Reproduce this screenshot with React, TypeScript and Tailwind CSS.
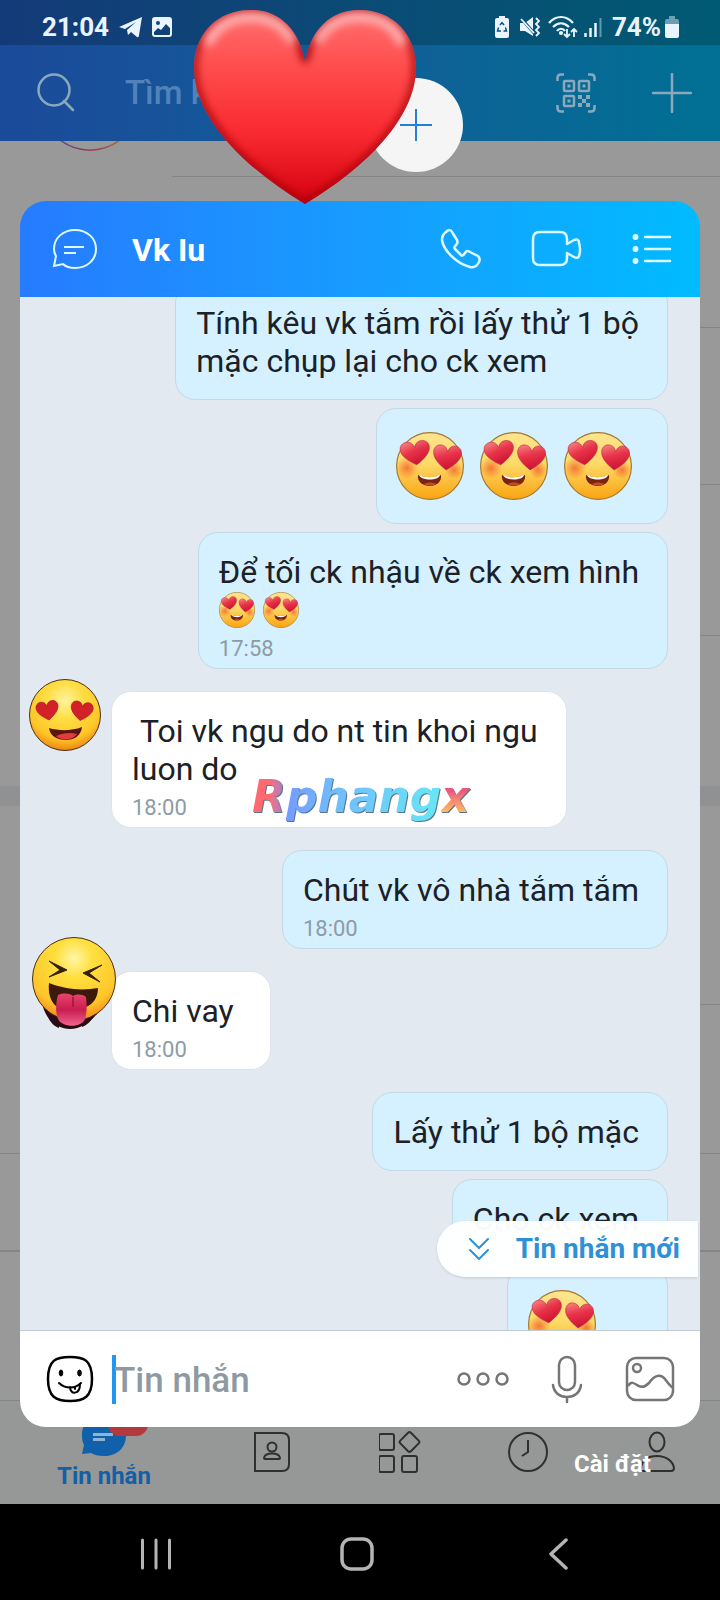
import React, { useState } from 'react';

const HEART =
  'M50 24 C47 10 38 1 25 1 C11 1 1 12 1 27 C1 51 24 72 50 90 C76 72 99 51 99 27 C99 12 89 1 75 1 C62 1 53 10 50 24Z';

const LoveFace = ({ className }: { className: string }) => (
  <svg viewBox="0 0 68 68" className={className} aria-hidden="true">
    <defs>
      <linearGradient id="faceFill" x1="0" y1="0" x2="0" y2="1">
        <stop offset="0" stopColor="#fde58f" />
        <stop offset="0.45" stopColor="#fddb6a" />
        <stop offset="1" stopColor="#fba30f" />
      </linearGradient>
      <radialGradient id="faceBlush">
        <stop offset="0" stopColor="#f4622a" stopOpacity="0.8" />
        <stop offset="1" stopColor="#f4622a" stopOpacity="0" />
      </radialGradient>
      <linearGradient id="eyeFill" x1="0" y1="0" x2="0.4" y2="1">
        <stop offset="0" stopColor="#f88a86" />
        <stop offset="0.5" stopColor="#e8344a" />
        <stop offset="1" stopColor="#cf1433" />
      </linearGradient>
    </defs>
    <circle cx="34" cy="34" r="33.4" fill="url(#faceFill)" stroke="#a47a32" strokeWidth="1.2" />
    <circle cx="11" cy="36" r="11" fill="url(#faceBlush)" />
    <circle cx="58" cy="38" r="9" fill="url(#faceBlush)" />
    <g fill="url(#eyeFill)" stroke="#b8283c" strokeWidth="2">
      <path transform="translate(3 11) rotate(-7) scale(.3 .265)" d={HEART} />
      <path transform="translate(38 12) rotate(5) scale(.285 .275)" d={HEART} />
    </g>
    <path d="M22 43 C28 46 39 46 45 43 C46 50 40 54 34 54 C27 54 21 50 22 43Z" fill="#7a2410" />
    <path d="M23 43 C29 46 38 46 44 43 C43 49 25 49 23 43Z" fill="#fff" />
    <path d="M28 52 C31 50 37 50 40 52 C37 54 31 54 28 52Z" fill="#c24a26" />
  </svg>
);

const GrinningLoveAvatar = () => (
  <svg viewBox="0 0 72 72" className="h-[72px] w-[72px]" aria-hidden="true">
    <defs>
      <radialGradient id="avatarOne" cx="0.5" cy="0.3" r="0.72">
        <stop offset="0" stopColor="#fff3a0" />
        <stop offset="0.35" stopColor="#ffdf45" />
        <stop offset="0.75" stopColor="#fdc526" />
        <stop offset="1" stopColor="#ec7d12" />
      </radialGradient>
    </defs>
    <circle cx="36" cy="36" r="35.5" fill="url(#avatarOne)" stroke="#4b2f10" strokeWidth="1" />
    <g fill="#d3212c" stroke="#a8141f" strokeWidth="3">
      <path transform="translate(6 24) rotate(-9) scale(.225 .21)" d={HEART} />
      <path transform="translate(43 21) rotate(9) scale(.225 .21)" d={HEART} />
    </g>
    <path d="M20 49 C30 52 43 52 53 48 C52 57 45 61 37 61 C28 61 21 57 20 49Z" fill="#5a1511" />
    <path d="M27 57 C33 54 42 53 48 55 C43 62 32 62 27 57Z" fill="#e33a3c" />
  </svg>
);

const TongueAvatar = () => (
  <svg viewBox="0 0 84 92" className="h-[92px] w-[84px]" aria-hidden="true">
    <defs>
      <radialGradient id="avatarTwo" cx="0.5" cy="0.25" r="0.78">
        <stop offset="0" stopColor="#fff6a6" />
        <stop offset="0.3" stopColor="#ffdf3d" />
        <stop offset="0.75" stopColor="#fec52a" />
        <stop offset="1" stopColor="#f07f17" />
      </radialGradient>
      <linearGradient id="tongue" x1="0" y1="0" x2="0" y2="1">
        <stop offset="0" stopColor="#e8456b" />
        <stop offset="0.5" stopColor="#c91d50" />
        <stop offset="1" stopColor="#f0648a" />
      </linearGradient>
    </defs>
    <path d="M11 70 C16 86 28 92 38 92 C50 92 60 84 67 74Z" fill="#2a0a14" />
    <circle cx="42" cy="42" r="41.5" fill="url(#avatarTwo)" stroke="#4b2f10" strokeWidth="1" />
    <path d="M17 24 L35 33 L17 40 L28 33Z M70 28 L51 36 L68 45 L57 36Z" fill="#33200c" stroke="#33200c" strokeWidth="1" />
    <path d="M17 46 C32 52 50 54 66 51 C66 61 61 67 54 70 L24 69 C18 64 16 55 17 46Z" fill="#3b1a0c" />
    <path d="M14 74 C18 79 22 82 27 83 V91 C21 89 16 83 14 74Z M62 79 C58 81 54 83 50 83 V90 C55 88 59 84 62 79Z" fill="#2a0a14" />
    <path d="M26 58 C31 56 37 56 41 59 C45 57 50 57 54 60 C55 68 55 76 53 82 C50 91 30 91 26 82 C23 75 24 64 26 58Z" fill="url(#tongue)" />
    <path d="M41 60 V70" stroke="#a31340" strokeWidth="1.5" />
  </svg>
);

const BigHeart = () => (
  <svg viewBox="0 0 224 196" className="h-[196px] w-[224px]" aria-hidden="true">
    <defs>
      <linearGradient id="heartFill" x1="0" y1="0" x2="0" y2="1">
        <stop offset="0" stopColor="#ff7070" />
        <stop offset="0.3" stopColor="#ff4c4c" />
        <stop offset="0.65" stopColor="#f8282f" />
        <stop offset="1" stopColor="#d3000f" />
      </linearGradient>
      <clipPath id="heartClip">
        <path d="M112 53 C106 20 86 1 58 1 C24 1 1 25 1 59 C1 108 50 158 112 195 C174 158 223 108 223 59 C223 25 200 1 166 1 C138 1 118 20 112 53Z" />
      </clipPath>
      <filter id="heartSoft" filterUnits="userSpaceOnUse" x="-30" y="-30" width="284" height="256">
        <feGaussianBlur stdDeviation="4" />
      </filter>
    </defs>
    <g clipPath="url(#heartClip)">
      <rect width="224" height="196" fill="url(#heartFill)" />
      <path
        d="M112 53 C106 20 86 1 58 1 C24 1 1 25 1 59 C1 108 50 158 112 195 C174 158 223 108 223 59 C223 25 200 1 166 1 C138 1 118 20 112 53Z"
        fill="none"
        stroke="#9c000c"
        strokeWidth="6"
        filter="url(#heartSoft)"
      />
      <g fill="none" stroke="#ffb8b8" strokeWidth="9" strokeLinecap="round" filter="url(#heartSoft)">
        <path d="M16 32 C26 14 42 8 58 8 C76 8 90 16 98 30" />
        <path d="M126 30 C134 16 148 8 166 8 C184 8 200 14 208 32" />
      </g>
    </g>
  </svg>
);

const StatusBar = () => (
  <div className="flex h-[45px] items-center bg-gradient-to-r from-[#133a78] to-[#005a72] pr-[41px] pl-[42px] pt-2 text-[#eaf4ff]">
    <span className="text-[26px] leading-8 font-bold">21:04</span>
    <svg viewBox="0 0 24 22" className="ml-[10px] h-[22px] w-6" fill="currentColor" aria-hidden="true">
      <path d="M0 11 L23 1 L20 19 C20 21 19 21.500 18 21 L12 16 L9 19 L8 14 L17 6 L6 13Z" />
    </svg>
    <svg viewBox="0 0 20 20" className="ml-[9px] h-5 w-5" aria-hidden="true">
      <rect x="1" y="1" width="18" height="18" rx="2" fill="none" stroke="currentColor" strokeWidth="2" />
      <path d="M1 1 H19 V12 L14 7 L9 13 L6 11 L1 16Z" fill="currentColor" />
      <circle cx="6" cy="6" r="2" fill="#12457f" />
    </svg>
    <div className="ml-auto flex items-center">
      <svg viewBox="0 0 14 22" className="h-[22px] w-[14px]" aria-hidden="true">
        <path d="M4 0 H10 V2 H12 Q14 2 14 4 V20 Q14 22 12 22 H2 Q0 22 0 20 V4 Q0 2 2 2 H4Z" fill="currentColor" />
        <path d="M5 9 L7 6.500 L9 9 M10.500 11.500 L11.500 15 H8.500 M3.500 11.500 L2.500 15 H6" fill="none" stroke="#0a4d78" strokeWidth="1.400" />
      </svg>
      <svg viewBox="0 0 22 22" className="ml-[10px] h-[22px] w-[22px]" aria-hidden="true">
        <path d="M1 7 H6 L14 1 V20 L6 15 H1Z" fill="currentColor" />
        <path d="M1 1 L15 17" stroke="#08507a" strokeWidth="3" />
        <path d="M2 3 L15 17" stroke="currentColor" strokeWidth="1.800" />
        <path d="M17 2 L20 5 L17 8 L20 11 L17 14 L20 17 L17 20" fill="none" stroke="currentColor" strokeWidth="1.800" />
      </svg>
      <svg viewBox="0 0 30 24" className="ml-[7px] h-6 w-[30px]" fill="none" stroke="currentColor" strokeWidth="2.200" aria-hidden="true">
        <path d="M1 8 C8 0 18 0 25 8 M5 12 C10 7 16 7 21 12 M9 16 C11 13 15 13 17 16" />
        <circle cx="13" cy="18" r="1" fill="currentColor" />
        <path d="M19 14 V22 M16 19 L19 22 L22 19 M26 22 V14 M23 17 L26 14 L29 17" strokeWidth="1.800" />
      </svg>
      <svg viewBox="0 0 18 20" className="ml-1.5 h-5 w-[18px]" aria-hidden="true">
        <path d="M1.500 20 V16 M6.500 20 V11 M11.500 20 V6" stroke="currentColor" strokeWidth="2.500" />
        <path d="M16.500 20 V1" stroke="#5f9ab5" strokeWidth="2" />
      </svg>
      <span className="ml-[10px] text-[26px] leading-8 font-bold">74%</span>
      <svg viewBox="0 0 14 22" className="ml-1 h-[22px] w-[14px]" aria-hidden="true">
        <path d="M4 0 H10 V3 H12 Q14 3 14 5 V9 H0 V5 Q0 3 2 3 H4Z" fill="#6d9fb3" />
        <path d="M0 8 H14 V20 Q14 22 12 22 H2 Q0 22 0 20Z" fill="currentColor" />
      </svg>
    </div>
  </div>
);

const SearchHeader = () => (
  <div className="flex h-24 items-center bg-gradient-to-r from-[#1b4a9b] to-[#007093] pr-7 pl-[37px] text-[#8aa9bd]">
    <svg viewBox="0 0 40 40" className="h-10 w-10 shrink-0" fill="none" stroke="currentColor" strokeWidth="2.500" strokeLinecap="round" aria-hidden="true">
      <circle cx="17" cy="17" r="15.500" />
      <path d="M27 28 L36 37" />
    </svg>
    <input
      type="search"
      aria-label="Tìm kiếm"
      placeholder="Tìm kiếm"
      className="ml-12 w-0 min-w-0 flex-1 bg-transparent text-[33px] leading-10 font-medium outline-none placeholder:text-[#5183ba]"
    />
    <button type="button" aria-label="QR" className="shrink-0">
      <svg viewBox="0 0 40 40" className="h-10 w-10" fill="none" stroke="currentColor" strokeWidth="2.500" aria-hidden="true">
        <path d="M1.500 8 V5 Q1.500 1.500 5 1.500 H8 M32 1.500 H35 Q38.500 1.500 38.500 5 V8 M38.500 32 V35 Q38.500 38.500 35 38.500 H32 M8 38.500 H5 Q1.500 38.500 1.500 35 V32" />
        <rect x="8" y="8" width="10" height="10" rx="1" />
        <rect x="23" y="8" width="10" height="10" rx="1" />
        <rect x="8" y="23" width="10" height="10" rx="1" />
        <path fill="currentColor" stroke="none" d="M11.500 11.500h3v3h-3z M26.500 11.500h3v3h-3z M11.500 26.500h3v3h-3z M22 22h4v4h-4z M30 22h4v4h-4z M26 26h4v4h-4z M22 30h4v4h-4z M30 30h4v4h-4z" />
      </svg>
    </button>
    <button type="button" aria-label="+" className="ml-14 shrink-0">
      <svg viewBox="0 0 40 40" className="h-10 w-10" stroke="currentColor" strokeWidth="2.500" strokeLinecap="round" aria-hidden="true">
        <path d="M20 1 V39 M1 20 H39" />
      </svg>
    </button>
  </div>
);

const ConversationRows = () => (
  <div className="flex-1 overflow-hidden bg-[#999999]">
    <div className="h-9 pl-[172px]">
      <div className="relative h-full border-b border-[#858585]">
        <svg viewBox="0 0 60 12" className="absolute top-0 -left-[112px] h-3 w-[60px]" fill="none" aria-hidden="true">
          <defs>
            <linearGradient id="storyRing">
              <stop offset="0" stopColor="#5a4a9a" />
              <stop offset="0.5" stopColor="#9c3a5c" />
              <stop offset="1" stopColor="#a8603c" />
            </linearGradient>
          </defs>
          <path d="M0 -1 C18 12.500 42 12.500 60 -1" stroke="url(#storyRing)" strokeWidth="1.500" />
        </svg>
      </div>
    </div>
    <div className="ml-[172px] h-[151px] border-b border-[#858585]" />
    <div className="ml-[172px] h-[157px] border-b border-[#858585]" />
    <div className="ml-[172px] h-[151px] border-b border-[#858585]" />
    <div className="h-[150px]" />
    <div className="h-5 bg-[#8f9193]" />
    <div className="ml-[172px] h-[199px] border-b border-[#858585]" />
    <div className="h-[149px] border-b border-[#858585]" />
    <div className="h-[98px] border-b-2 border-[#858585]" />
  </div>
);

const tabIcon = 'h-[42px] w-[42px]';

const TabBar = () => (
  <nav className="flex h-[104px] border-t border-[#838685] bg-[#959896] text-[#2d302f]">
    <a href="#messages" className="flex w-[208px] flex-col items-center pt-[11px] text-[#145fa6]">
      <svg viewBox="0 0 66 46" className="ml-[22px] h-[46px] w-[66px]" aria-hidden="true">
        <path d="M22 2 C35 2 44 11 44 23 C44 36 35 44 22 44 C16 44 12 43 9 41 L0 42 L2 33 C0 29 0 26 0 23 C0 11 9 2 22 2Z" fill="#1160aa" />
        <path d="M11 22.500 H31 M11 27.500 H23" stroke="#8db4d4" strokeWidth="3" />
        <rect x="26" y="0" width="40" height="24" rx="12" fill="#b3393c" />
      </svg>
      <span className="mt-1 text-2xl leading-7 font-bold">Tin nhắn</span>
    </a>
    <a href="#contacts" aria-label="Danh bạ" className="flex flex-1 justify-center pt-[30px]">
      <svg viewBox="0 0 42 42" className={tabIcon} fill="none" stroke="currentColor" strokeWidth="2" aria-hidden="true">
        <path d="M4 2 H31 Q38 2 38 9 V33 Q38 40 31 40 H4Z" />
        <circle cx="21" cy="16" r="4.500" />
        <path d="M13 27 C14 21 28 21 29 27 Q29 28 28 28 H14 Q13 28 13 27Z" />
      </svg>
    </a>
    <a href="#discover" aria-label="Khám phá" className="flex flex-1 justify-center pt-[30px]">
      <svg viewBox="0 0 42 42" className={tabIcon} fill="none" stroke="currentColor" strokeWidth="2" aria-hidden="true">
        <rect x="0" y="3" width="15" height="16" rx="2" />
        <rect x="0" y="25" width="15" height="16" rx="2" />
        <rect x="23" y="25" width="15" height="16" rx="2" />
        <rect x="23" y="3.500" width="15" height="15" rx="2" transform="rotate(45 30.500 11)" />
      </svg>
    </a>
    <a href="#timeline" aria-label="Nhật ký" className="flex flex-1 justify-center pt-[30px]">
      <svg viewBox="0 0 42 42" className={tabIcon} fill="none" stroke="currentColor" strokeWidth="2" aria-hidden="true">
        <circle cx="21" cy="21" r="19" />
        <path d="M21 9 V21 L15 25" />
      </svg>
    </a>
    <a href="#me" className="relative flex flex-1 justify-center pt-[30px]">
      <svg viewBox="0 0 42 42" className={tabIcon} fill="none" stroke="currentColor" strokeWidth="2" aria-hidden="true">
        <ellipse cx="22" cy="11" rx="7.500" ry="9.500" />
        <path d="M6 37 C7 29 13 25 22 25 C31 25 38 30 39 37 Q39 40 36 40 H8 Q5 40 6 37Z" />
      </svg>
      <span className="absolute right-[69px] bottom-[26px] text-2xl leading-7 font-bold whitespace-nowrap text-white">Cài đặt</span>
    </a>
  </nav>
);

const SystemNav = () => (
  <div className="flex h-24 items-center bg-black pt-1 pr-[62px] pl-[55px] text-[#b4b4b4]">
    <button type="button" aria-label="Recents" className="flex flex-1 justify-center">
      <svg viewBox="0 0 34 34" className="h-[34px] w-[34px]" stroke="currentColor" strokeWidth="3" strokeLinecap="round" aria-hidden="true">
        <path d="M3.500 3 V31 M17 3 V31 M30.500 3 V31" />
      </svg>
    </button>
    <button type="button" aria-label="Home" className="flex flex-1 justify-center">
      <svg viewBox="0 0 36 36" className="h-9 w-9" fill="none" stroke="currentColor" strokeWidth="3.500" aria-hidden="true">
        <rect x="3" y="3" width="30" height="30" rx="9" />
      </svg>
    </button>
    <button type="button" aria-label="Back" className="flex flex-1 justify-center">
      <svg viewBox="0 0 20 34" className="h-[34px] w-5" fill="none" stroke="currentColor" strokeWidth="3.500" strokeLinecap="round" strokeLinejoin="round" aria-hidden="true">
        <path d="M18 3 L3 17 L18 31" />
      </svg>
    </button>
  </div>
);

interface BubbleProps {
  mine?: boolean;
  time?: string;
  children: React.ReactNode;
}

const Bubble = ({ mine, time, children }: BubbleProps) => (
  <div
    className={
      (mine ? 'border-[#c3d9e6] bg-[#d5f0ff] ' : 'border-[#dfe4ea] bg-white ') +
      (time ? 'pb-1.5 ' : 'pb-[19px] ') +
      'min-w-[160px] rounded-[20px] border pt-5 pr-7 pl-5 text-[32px] leading-[38px] text-[#1b2126]'
    }
  >
    {children}
    {time && <time className="mt-[7px] block text-[22px] leading-[26px] text-[#8d9ba5]">{time}</time>}
  </div>
);

const EmojiBubble = ({ count }: { count: number }) => (
  <div className="flex gap-4 rounded-[20px] border border-[#c3d9e6] bg-[#d5f0ff] py-[23px] pr-[35px] pl-[19px]">
    {Array.from({ length: count }, (_, i) => (
      <LoveFace key={i} className="h-[68px] w-[68px]" />
    ))}
  </div>
);

const Watermark = () => (
  <div className="absolute top-[80px] left-[141px] font-['DejaVu_Sans'] text-[44px] leading-[52px] font-bold italic opacity-90 drop-shadow-[1px_1px_0px_#4a6a7a]">
    <span className="bg-gradient-to-r from-[#ff5a62] from-50% to-[#8a6ad0] bg-clip-text text-transparent">R</span>
    <span className="bg-gradient-to-r from-[#6690ff] via-[#62b4fc] via-30% to-[#58e4f4] bg-clip-text text-transparent">phang</span>
    <span className="bg-gradient-to-b from-[#e8486e] from-40% to-[#ffb44a] to-80% bg-clip-text text-transparent">x</span>
  </div>
);

const ChatHeader = () => (
  <header className="flex h-24 shrink-0 items-center bg-gradient-to-r from-[#267bff] to-[#00bbff] pr-7 pl-8 text-[#dcfbff]">
    <svg viewBox="0 0 46 42" className="h-[42px] w-[46px]" fill="none" stroke="currentColor" strokeWidth="2" aria-hidden="true">
      <path d="M23 2 C35 2 44 10 44 21 C44 32 35 40 23 40 C17 40 13 38 11 36 L2 38 L4 28 C2 25 2 23 2 21 C2 10 11 2 23 2Z" />
      <path d="M12 19 H32 M12 25 H24" />
    </svg>
    <h1 className="ml-[34px] pt-0.5 text-[32px] leading-10 font-bold text-white">Vk Iu</h1>
    <button type="button" aria-label="Gọi" className="ml-auto">
      <svg viewBox="0 0 42 42" className="h-[42px] w-[42px]" fill="none" stroke="currentColor" strokeWidth="2.500" strokeLinejoin="round" aria-hidden="true">
        <path d="M6 4 C9 1 11 2 12 4 L17 12 C18 14 18 15 16 17 C14 19 14 20 15 21 L21 27 C22 28 23 28 25 25 C26 23 27 22 30 24 L38 28 C40 30 40 32 39 34 C37 38 34 40 30 39 C15 35 3 21 2 12 C2 9 3 6 6 4Z" />
      </svg>
    </button>
    <button type="button" aria-label="Gọi video" className="ml-[49px]">
      <svg viewBox="0 0 52 42" className="h-[42px] w-[52px]" fill="none" stroke="currentColor" strokeWidth="2.500" strokeLinejoin="round" aria-hidden="true">
        <path d="M9 4 H29 Q36 4 36 11 V16 L43 12 Q48 10 48 15 Q50 22 48 28 Q47 31 43 29 L36 25 V30 Q36 37 29 37 H9 Q2 37 2 30 V11 Q2 4 9 4Z" />
      </svg>
    </button>
    <button type="button" aria-label="Tùy chọn" className="ml-[49px]">
      <svg viewBox="0 0 40 42" className="h-[42px] w-10" stroke="currentColor" strokeWidth="2.500" fill="currentColor" strokeLinecap="round" aria-hidden="true">
        <path d="M13 9 H38 M13 21 H38 M13 33 H38" />
        <circle cx="3.500" cy="9" r="1.700" />
        <circle cx="3.500" cy="21" r="1.700" />
        <circle cx="3.500" cy="33" r="1.700" />
      </svg>
    </button>
  </header>
);

const MessageList = () => (
  <div className="relative min-h-0 flex-1 overflow-hidden bg-[#e2e9f1]">
    <div className="-mt-[14px] flex flex-col gap-[22px] pr-8 pl-[91px]">
      <div className="flex flex-col items-end gap-2">
        <Bubble mine>
          Tính kêu vk tắm rồi lấy thử 1 bộ<br />mặc chụp lại cho ck xem
        </Bubble>
        <EmojiBubble count={3} />
        <Bubble mine time="17:58">
          Để tối ck nhậu về ck xem hình
          <div className="flex h-[38px] items-center gap-2">
            <LoveFace className="h-9 w-9" />
            <LoveFace className="h-9 w-9" />
          </div>
        </Bubble>
      </div>
      <div className="relative self-start">
        <Bubble time="18:00">
          &nbsp;Toi vk ngu do nt tin khoi ngu<br />luon do
        </Bubble>
        <div className="absolute -top-3 -left-[82px]">
          <GrinningLoveAvatar />
        </div>
        <Watermark />
      </div>
      <div className="self-end">
        <Bubble mine time="18:00">Chút vk vô nhà tắm tắm</Bubble>
      </div>
      <div className="relative self-start">
        <Bubble time="18:00">Chi vay</Bubble>
        <div className="absolute -top-[34px] -left-[79px]">
          <TongueAvatar />
        </div>
      </div>
      <div className="flex flex-col items-end gap-2">
        <Bubble mine>Lấy thử 1 bộ mặc</Bubble>
        <Bubble mine>Cho ck xem</Bubble>
        <div className="flex w-[161px] rounded-[20px] border border-[#c3d9e6] bg-[#d5f0ff] px-5 py-[23px]">
          <LoveFace className="h-[68px] w-[68px]" />
        </div>
      </div>
    </div>
    <button
      type="button"
      className="absolute right-0.5 bottom-[53px] flex h-14 items-center rounded-l-full bg-white/97 pr-[18px] pl-8 text-[#2f90d8] shadow"
    >
      <svg viewBox="0 0 20 22" className="h-[22px] w-5" fill="none" stroke="currentColor" strokeWidth="2" strokeLinecap="round" aria-hidden="true">
        <path d="M1 1 L10 10 L19 1 M1 12 L10 21 L19 12" />
      </svg>
      <span className="ml-[27px] text-[28px] leading-8 font-bold">Tin nhắn mới</span>
    </button>
  </div>
);

const Composer = () => {
  const [text, setText] = useState('');

  return (
    <form
      className="flex h-[97px] shrink-0 items-center border-t border-[#c3ccd4] bg-white pr-[25px] pl-[26px] text-[#757575]"
      onSubmit={(e) => e.preventDefault()}
    >
      <button type="button" aria-label="Sticker" className="text-black">
        <svg viewBox="0 0 48 48" className="h-12 w-12" fill="none" stroke="currentColor" strokeWidth="2.500" aria-hidden="true">
          <path d="M24 2 C38 2 46 5 46 24 C46 42 38 46 24 46 C10 46 2 42 2 24 C2 5 10 2 24 2Z" />
          <ellipse cx="15" cy="18" rx="1.800" ry="3" fill="currentColor" strokeWidth="1" />
          <ellipse cx="33.500" cy="18" rx="1.800" ry="3" fill="currentColor" strokeWidth="1" />
          <path d="M13 28 C19 34 29 34 35 28 M24 32 C24 40 34 40 34 29 M29 32 V34" strokeWidth="2" strokeLinecap="round" />
        </svg>
      </button>
      <span className="ml-[18px] h-[49px] w-1 shrink-0 bg-[#2196f3]" />
      <input
        type="text"
        aria-label="Tin nhắn"
        value={text}
        onChange={(e) => setText(e.target.value)}
        placeholder="Tin nhắn"
        className="-ml-0.5 w-0 min-w-0 flex-1 bg-transparent pt-[3px] text-[35px] leading-[42px] font-medium text-[#1b2126] outline-none placeholder:text-[#8e99a2]"
      />
      <button type="button" aria-label="Thêm">
        <svg viewBox="0 0 52 48" className="h-12 w-[52px]" fill="none" stroke="currentColor" strokeWidth="2.500" aria-hidden="true">
          <circle cx="7" cy="24" r="5.500" />
          <circle cx="26" cy="24" r="5.500" />
          <circle cx="45" cy="24" r="5.500" />
        </svg>
      </button>
      <button type="button" aria-label="Ghi âm" className="ml-[42px]">
        <svg viewBox="0 0 32 48" className="h-12 w-8" fill="none" stroke="currentColor" strokeWidth="2.500" strokeLinecap="round" aria-hidden="true">
          <rect x="8" y="2" width="16" height="33" rx="8" />
          <path d="M2 30 C3 38 9 42 16 42 C23 42 29 38 30 30 M16 42 V47" />
        </svg>
      </button>
      <button type="button" aria-label="Ảnh" className="ml-[42px]">
        <svg viewBox="0 0 50 48" className="h-12 w-[50px]" fill="none" stroke="currentColor" strokeWidth="2.500" aria-hidden="true">
          <rect x="2" y="3" width="46" height="42" rx="9" />
          <circle cx="12" cy="13" r="4" />
          <path d="M3 31 C6 26 9 28 12 30 C17 34 21 31 24 28 C31 18 37 20 40 24 C43 28 45 31 48 33" />
        </svg>
      </button>
    </form>
  );
};

export default function App() {
  return (
    <div className="grid h-screen overflow-hidden bg-black font-[Roboto,sans-serif]">
      <div className="col-start-1 row-start-1 flex min-h-0 flex-col">
        <StatusBar />
        <SearchHeader />
        <ConversationRows />
        <TabBar />
        <SystemNav />
      </div>

      <main className="relative z-10 col-start-1 row-start-1 mx-5 mt-[201px] mb-[173px] flex min-h-0 flex-col">
        <section className="flex min-h-0 flex-1 flex-col overflow-hidden rounded-[26px]">
          <ChatHeader />
          <MessageList />
          <Composer />
        </section>
        <button
          type="button"
          aria-label="Thêm cuộc trò chuyện"
          className="absolute -top-[123px] left-[349px] flex h-[94px] w-[94px] items-center justify-center rounded-full bg-[#f5f5f5] text-[#2380d6]"
        >
          <svg viewBox="0 0 32 32" className="h-8 w-8" stroke="currentColor" strokeWidth="2" aria-hidden="true">
            <path d="M16 0 V32 M0 16 H32" />
          </svg>
        </button>
        <div className="absolute -top-[192px] left-[173px]">
          <BigHeart />
        </div>
      </main>
    </div>
  );
}
